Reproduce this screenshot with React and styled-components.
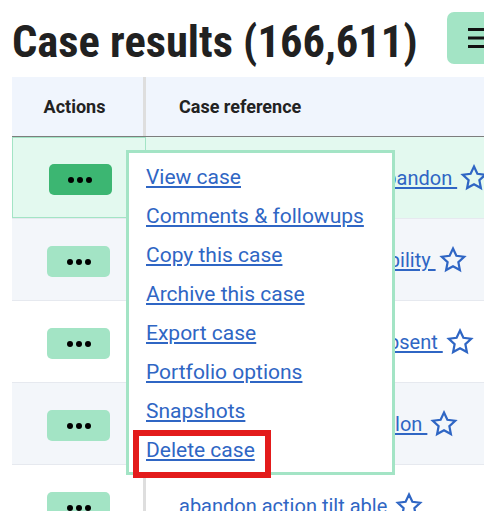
import React from "react";
import styled, { createGlobalStyle, css } from "styled-components";

const GlobalStyle = createGlobalStyle`
  html, body {
    margin: 0;
    padding: 0;
    background: #ffffff;
    overflow: hidden;
    font-family: Roboto, "Liberation Sans", Arial, sans-serif;
  }
  *, *::before, *::after { box-sizing: border-box; }
`;

const Page = styled.div`
  width: 484px;
  height: 511px;
  overflow: hidden;
`;

const Header = styled.header`
  display: flex;
  align-items: flex-start;
  gap: 29px;
  padding: 12px 0 0 12px;
  width: 700px;
`;

const Title = styled.h1`
  margin: 0;
  padding-top: 4px;
  font: 700 44.5px/52px "Roboto Condensed", Roboto, "Liberation Sans", sans-serif;
  color: #212121;
  white-space: nowrap;
`;

const MenuToggle = styled.button`
  flex-shrink: 0;
  display: flex;
  align-items: center;
  width: 72px;
  height: 52px;
  padding: 0 0 0 21px;
  border: none;
  border-radius: 7px;
  background: #a3e4c5;
  color: #111;
`;

const Table = styled.div`
  position: relative;
  margin: 9px 0 0 12px;
  width: 620px;
`;

const HeadRow = styled.div`
  display: grid;
  grid-template-columns: 134px 1fr;
  height: 60px;
  background: #f0f5fd;
  border-bottom: 1px solid #7d7d7d;
`;

const HeadCell = styled.div`
  display: flex;
  align-items: center;
  font: 700 18px Roboto, sans-serif;
  color: #222;
  ${(p) =>
    p.$actions
      ? css`
          justify-content: center;
          padding-right: 6px;
          border-right: 3px solid #dedede;
        `
      : css`
          padding-left: 33px;
        `}
`;

const Row = styled.div`
  display: grid;
  grid-template-columns: 134px 1fr;
  height: 82px;
  border-bottom: 1px solid #e6e9ef;
  background: ${(p) => p.$bg};
`;

const ActionsCell = styled.div`
  display: flex;
  align-items: center;
  justify-content: center;
  padding: 4px 0 0 2px;
  ${(p) =>
    p.$active
      ? css`
          border: 1px solid #a3e4c5;
        `
      : css`
          border-right: 3px solid #dedede;
        `}
`;

const DotsButton = styled.button`
  display: flex;
  align-items: center;
  justify-content: center;
  gap: 3px;
  width: 63px;
  height: 31px;
  padding: 0;
  border: none;
  border-radius: 5px;
  background: ${(p) => (p.$active ? "#3cb672" : "#a3e4c5")};
`;

const Dot = styled.span`
  width: 6px;
  height: 6px;
  border-radius: 50%;
  background: #000;
`;

const RefCell = styled.div`
  display: flex;
  align-items: center;
  padding: 0 0 0 33px;
  white-space: nowrap;
`;

const RefLink = styled.a`
  font-size: 20px;
  color: #2f66c4;
  text-decoration: underline;
  text-decoration-thickness: 1.5px;
  text-underline-offset: 2px;
`;

const StarIcon = styled.svg`
  flex-shrink: 0;
  margin-left: 3px;
`;

const Menu = styled.div`
  position: absolute;
  left: 114px;
  top: 73px;
  width: 269px;
  border: 3px solid #a3e4c5;
  background: #ffffff;
  padding: 5px 0 2px 17px;
`;

const MenuItem = styled.div`
  position: relative;
  line-height: 39px;
  font-size: 21px;
  ${(p) =>
    p.$highlight &&
    css`
      &::after {
        content: "";
        position: absolute;
        left: -13px;
        top: -1px;
        width: 138px;
        height: 48px;
        border: 6px solid #e31b1b;
      }
    `}
`;

const MenuLink = styled.a`
  color: #2f66c4;
  text-decoration: underline;
  text-decoration-thickness: 1.5px;
  text-underline-offset: 2px;
`;

const Star = () => (
  <StarIcon width="28" height="28" viewBox="0 0 24 24" aria-hidden="true">
    <polygon
      points="12,2.2 14.9,8.4 21.6,9.2 16.6,13.9 17.9,20.6 12,17.3 6.1,20.6 7.4,13.9 2.4,9.2 9.1,8.4"
      fill="none"
      stroke="#2f66c4"
      strokeWidth="1.9"
      strokeLinejoin="miter"
    />
  </StarIcon>
);

const Hamburger = () => (
  <svg width="24" height="21" viewBox="0 0 24 21" aria-hidden="true">
    <rect x="0" y="0" width="24" height="3" fill="#111" />
    <rect x="0" y="8.5" width="24" height="3" fill="#111" />
    <rect x="0" y="17" width="24" height="3" fill="#111" />
  </svg>
);

const rows = [
  { text: "able action tilt across abandon", bg: "#e3f9ef", active: true },
  { text: "abandon action admit ability", bg: "#f3f6fa" },
  { text: "abandon action agent absent", bg: "#ffffff" },
  { text: "abandon across alien salon", bg: "#f3f6fa" },
  { text: "abandon action tilt able", bg: "#ffffff" },
];

const menuItems = [
  "View case",
  "Comments & followups",
  "Copy this case",
  "Archive this case",
  "Export case",
  "Portfolio options",
  "Snapshots",
  "Delete case",
];

export default function App() {
  return (
    <Page>
      <GlobalStyle />
      <Header>
        <Title>Case results (166,611)</Title>
        <MenuToggle aria-label="Menu">
          <Hamburger />
        </MenuToggle>
      </Header>
      <Table>
        <HeadRow>
          <HeadCell $actions>Actions</HeadCell>
          <HeadCell>Case reference</HeadCell>
        </HeadRow>
        {rows.map((r, i) => (
          <Row key={i} $bg={r.bg}>
            <ActionsCell $active={r.active}>
              <DotsButton $active={r.active} aria-label="Actions">
                <Dot />
                <Dot />
                <Dot />
              </DotsButton>
            </ActionsCell>
            <RefCell>
              <RefLink href="#">{r.text + "\u00a0"}</RefLink>
              <Star />
            </RefCell>
          </Row>
        ))}
        <Menu>
          {menuItems.map((m) => (
            <MenuItem key={m} $highlight={m === "Delete case"}>
              <MenuLink href="#">{m}</MenuLink>
            </MenuItem>
          ))}
        </Menu>
      </Table>
    </Page>
  );
}
